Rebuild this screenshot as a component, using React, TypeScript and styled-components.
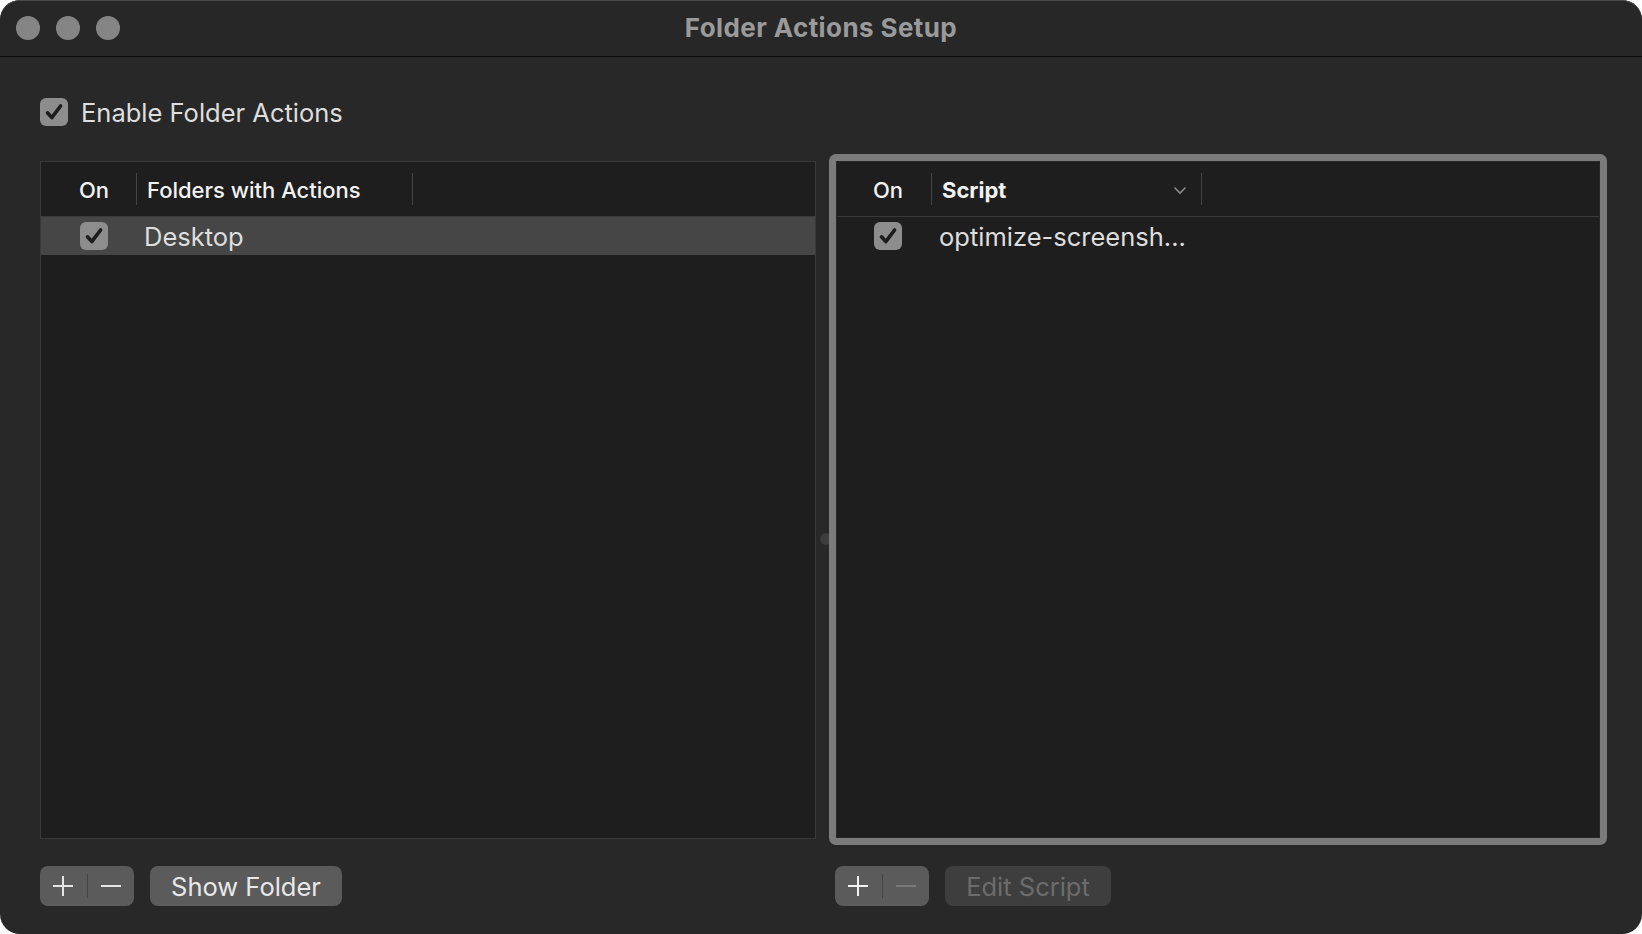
import React from "react";
import styled, { createGlobalStyle } from "styled-components";

const Global = createGlobalStyle`
  html, body { margin: 0; padding: 0; background: #ffffff; }
  body { font-family: "Inter", "Liberation Sans", sans-serif; -webkit-font-smoothing: antialiased; }
  * { box-sizing: border-box; }
`;

const Window = styled.div`
  width: 1642px;
  height: 934px;
  border-radius: 20px;
  background: #282828;
  overflow: hidden;
  display: flex;
  flex-direction: column;
  box-shadow: inset 0 1px 0 #5a5a5a;
`;

const TitleBar = styled.div`
  height: 57px;
  flex: none;
  display: grid;
  grid-template-columns: 1fr auto 1fr;
  align-items: center;
  padding: 0 16px 1px;
  background: #272727;
  border-bottom: 1px solid #0a0a0a;
  border-top: 1px solid #4a4a4a;
  border-radius: 20px 20px 0 0;
`;

const Lights = styled.div`
  display: flex;
  gap: 16px;
`;

const Light = styled.span`
  width: 24px;
  height: 24px;
  border-radius: 50%;
  background: #858585;
`;

const Title = styled.div`
  font-size: 26px;
  font-weight: 700;
  color: #9a9a9a;
  letter-spacing: 0.4px;
  margin-top: -1px;
`;

const Content = styled.div`
  flex: 1;
  display: flex;
  flex-direction: column;
  padding: 41px 35px 0 40px;
`;

const EnableRow = styled.label`
  display: flex;
  align-items: center;
  gap: 13px;
  height: 28px;
  margin-bottom: 28px;
  font-size: 25.5px;
  color: #dedede;
`;

const CheckBox = styled.span`
  width: 28px;
  height: 28px;
  flex: none;
  border-radius: 6px;
  background: #8d8d8d;
  display: flex;
  align-items: center;
  justify-content: center;
`;

const Panes = styled.div`
  display: grid;
  grid-template-columns: 776px 13px 778px;
  align-items: start;
`;

const Table = styled.div<{ $border: string }>`
  background: #1e1e1e;
  border: 1px solid ${(p) => p.$border};
  display: flex;
  flex-direction: column;
`;

const LeftTable = styled(Table)`
  height: 678px;
  margin-top: 7px;
`;

const RightTable = styled(Table)`
  height: 677px;
`;

const FocusRing = styled.div`
  width: 778px;
  height: 691px;
  padding: 7px;
  background: #7b7b7b;
  border-radius: 7px;
  position: relative;
  z-index: 1;
`;

const Splitter = styled.div`
  height: 691px;
  display: flex;
  align-items: center;
  justify-content: flex-end;
`;

const SplitDot = styled.span`
  width: 12px;
  height: 12px;
  border-radius: 50%;
  background: #3d3d3d;
  margin-right: -3px;
  margin-top: 78px;
`;

const HeaderRow = styled.div<{ $cols: string }>`
  height: 55px;
  flex: none;
  display: grid;
  grid-template-columns: ${(p) => p.$cols};
  align-items: center;
  border-bottom: 1px solid #3a3a3a;
`;

const HeaderCell = styled.div<{ $pad: number; $bold?: boolean }>`
  height: 32px;
  display: flex;
  align-items: center;
  padding-left: ${(p) => p.$pad}px;
  padding-right: 14px;
  border-right: 1px solid #454545;
  font-size: 22px;
  font-weight: ${(p) => (p.$bold ? 700 : 500)};
  color: #f2f2f2;
  justify-content: space-between;
  padding-top: 2px;
`;

const BodyRow = styled.div<{ $cols: string; $selected?: boolean }>`
  height: 38px;
  display: grid;
  grid-template-columns: ${(p) => p.$cols};
  align-items: center;
  background: ${(p) => (p.$selected ? "#464646" : "transparent")};
`;

const BodyCell = styled.div<{ $pad: number }>`
  padding-left: ${(p) => p.$pad}px;
  display: flex;
  align-items: center;
  font-size: 25.5px;
  color: #dedede;
  white-space: nowrap;
`;

const BottomBar = styled.div`
  display: grid;
  grid-template-columns: 776px 13px 778px;
  margin-top: 21px;
`;

const ButtonGroup = styled.div<{ $indent?: number }>`
  display: flex;
  gap: 16px;
  padding-left: ${(p) => p.$indent || 0}px;
`;

const Segmented = styled.div`
  width: 94px;
  height: 40px;
  border-radius: 8px;
  background: #5b5b5b;
  display: flex;
  align-items: center;
`;

const SegButton = styled.span`
  flex: 1;
  height: 100%;
  display: flex;
  align-items: center;
  justify-content: center;
`;

const SegDivider = styled.span`
  width: 1px;
  height: 24px;
  background: #444444;
`;

const PushButton = styled.div<{ $disabled?: boolean; $width: number }>`
  width: ${(p) => p.$width}px;
  height: 40px;
  border-radius: 8px;
  background: ${(p) => (p.$disabled ? "#3e3e3e" : "#5b5b5b")};
  color: ${(p) => (p.$disabled ? "#6c6c6c" : "#e8e8e8")};
  font-size: 25.5px;
  display: flex;
  align-items: center;
  justify-content: center;
`;

const Check = () => (
  <CheckBox>
    <svg width="28" height="28" viewBox="0 0 28 28">
      <path
        d="M7.5 14.8 L11.8 19.6 L20.6 8"
        fill="none"
        stroke="#1c1c1c"
        strokeWidth="3.6"
        strokeLinecap="round"
        strokeLinejoin="round"
      />
    </svg>
  </CheckBox>
);

const PlusIcon = ({ color }: { color: string }) => (
  <svg width="22" height="22" viewBox="0 0 22 22">
    <path d="M11 1 V21 M1 11 H21" stroke={color} strokeWidth="2" fill="none" />
  </svg>
);

const MinusIcon = ({ color }: { color: string }) => (
  <svg width="22" height="22" viewBox="0 0 22 22">
    <path d="M1 11 H21" stroke={color} strokeWidth="2" fill="none" />
  </svg>
);

const Chevron = () => (
  <svg width="14" height="9" viewBox="0 0 14 9">
    <path d="M1.5 1.5 L7 7 L12.5 1.5" stroke="#8a8a8a" strokeWidth="1.6" fill="none" />
  </svg>
);

const LEFT_COLS = "96px 276px 1fr";
const RIGHT_COLS = "95px 270px 1fr";

export default function App() {
  return (
    <>
      <Global />
      <Window>
        <TitleBar>
          <Lights>
            <Light />
            <Light />
            <Light />
          </Lights>
          <Title>Folder Actions Setup</Title>
          <div />
        </TitleBar>
        <Content>
          <EnableRow>
            <Check />
            Enable Folder Actions
          </EnableRow>
          <Panes>
            <LeftTable $border="#3a3a3a">
              <HeaderRow $cols={LEFT_COLS}>
                <HeaderCell $pad={38}>On</HeaderCell>
                <HeaderCell $pad={10}>Folders with Actions</HeaderCell>
                <div />
              </HeaderRow>
              <BodyRow $cols={LEFT_COLS} $selected>
                <BodyCell $pad={39}>
                  <Check />
                </BodyCell>
                <BodyCell $pad={7}>Desktop</BodyCell>
                <div />
              </BodyRow>
            </LeftTable>
            <Splitter>
              <SplitDot />
            </Splitter>
            <FocusRing>
              <RightTable $border="#262626">
                <HeaderRow $cols={RIGHT_COLS}>
                  <HeaderCell $pad={36}>On</HeaderCell>
                  <HeaderCell $pad={10} $bold>
                    Script
                    <Chevron />
                  </HeaderCell>
                  <div />
                </HeaderRow>
                <BodyRow $cols={RIGHT_COLS}>
                  <BodyCell $pad={37}>
                    <Check />
                  </BodyCell>
                  <BodyCell $pad={7}>optimize-screensh...</BodyCell>
                  <div />
                </BodyRow>
              </RightTable>
            </FocusRing>
          </Panes>
          <BottomBar>
            <ButtonGroup>
              <Segmented>
                <SegButton>
                  <PlusIcon color="#e4e4e4" />
                </SegButton>
                <SegDivider />
                <SegButton>
                  <MinusIcon color="#e4e4e4" />
                </SegButton>
              </Segmented>
              <PushButton $width={192}>Show Folder</PushButton>
            </ButtonGroup>
            <div />
            <ButtonGroup $indent={6}>
              <Segmented>
                <SegButton>
                  <PlusIcon color="#f2f2f2" />
                </SegButton>
                <SegDivider />
                <SegButton>
                  <MinusIcon color="#7a7a7a" />
                </SegButton>
              </Segmented>
              <PushButton $width={166} $disabled>
                Edit Script
              </PushButton>
            </ButtonGroup>
          </BottomBar>
        </Content>
      </Window>
    </>
  );
}
